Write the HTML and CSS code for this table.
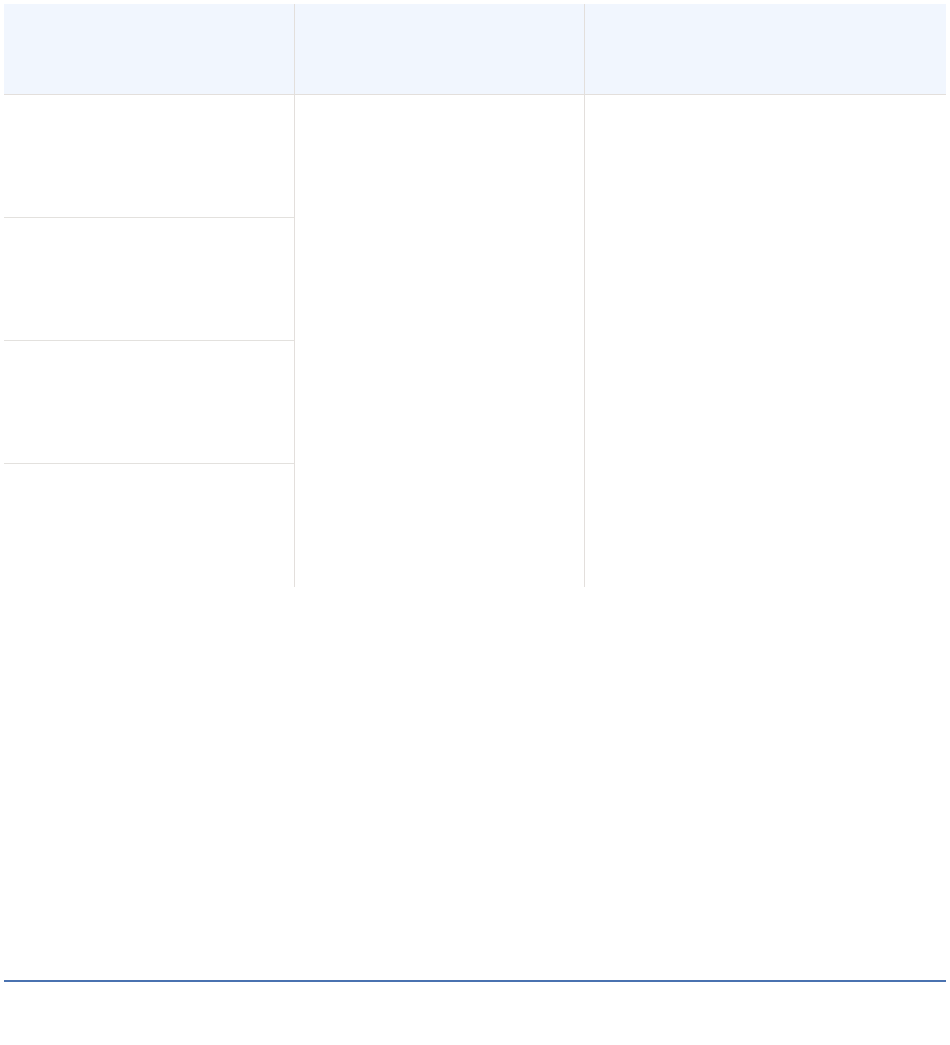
FILE: index.html
```html
<!DOCTYPE html>
<html lang="en">
<head>
<meta charset="UTF-8">
<title>Tabela</title>
<link rel="stylesheet" href="styles.css">
</head>
<body>
<div class="tabela">
    <div class="cab col1"></div>
    <div class="cab col2"></div>
    <div class="cab col3"></div>

    <div class="linhas">
        <div class="linha"></div>
        <div class="linha"></div>
        <div class="linha"></div>
        <div class="linha"></div>
    </div>
    <div class="corpo col2"></div>
    <div class="corpo col3"></div>
</div>

<div class="rodape"></div>
</body>
</html>
```

FILE: styles.css
```css
body { margin: 4px; font-family: "Liberation Sans", Arial, sans-serif; background: #fff; }
.tabela { display: grid; grid-template-columns: 291px 290px 362px; grid-template-rows: 91px 492px; width: 943px; }
.cab { background: #f1f6fe; border-bottom: 1px solid #e3dfdc; }
.col1, .col2 { border-right: 1px solid #e3dfdc; }
.linhas { display: flex; flex-direction: column; border-right: 1px solid #e3dfdc; }
.linha { height: 122px; border-bottom: 1px solid #e3e1de; }
.linha:last-child { height: 123px; border-bottom: none; }
.corpo { height: 492px; }
.rodape { margin-top: 393px; width: 944px; height: 2px; background: #4a72b0; }
```
